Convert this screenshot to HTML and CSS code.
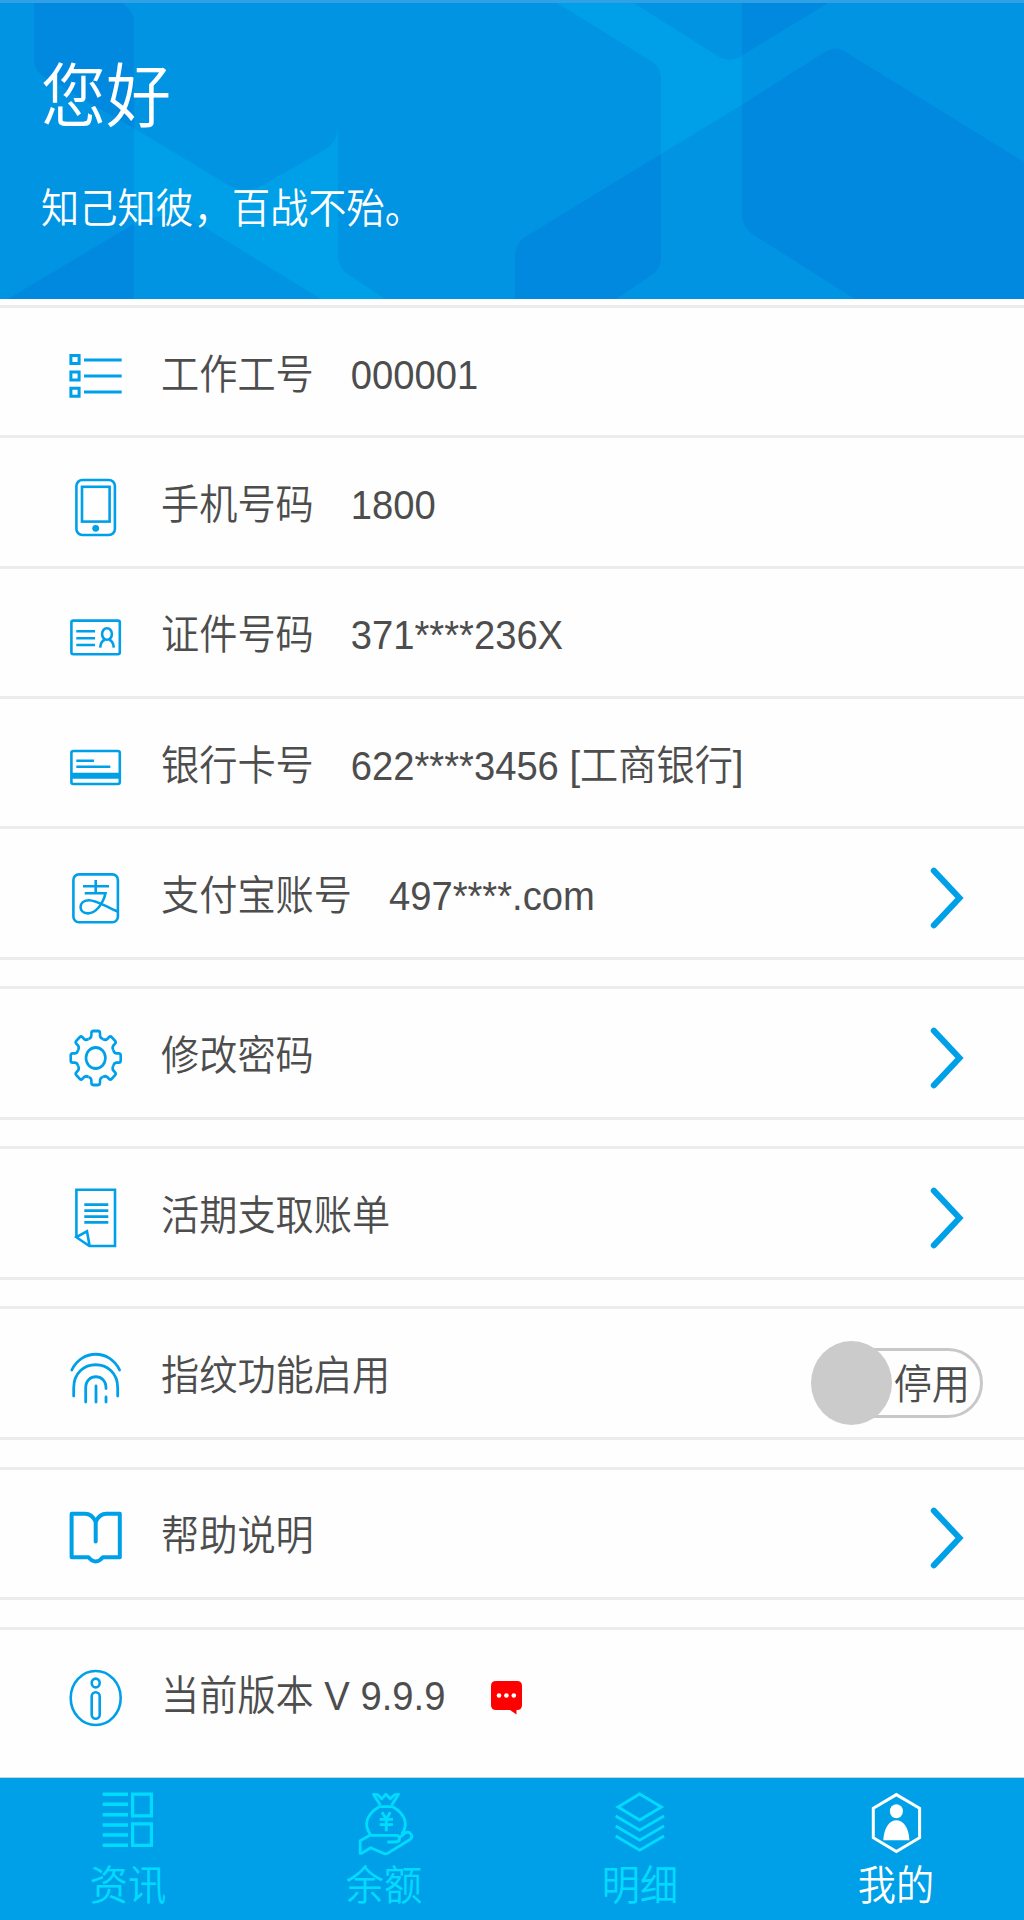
FILE: index.html
```html
<!DOCTYPE html>
<html lang="zh-CN">
<head>
    <meta charset="UTF-8">
    <meta name="viewport" content="width=device-width, initial-scale=1.0">
    <title>我的</title>
    <link rel="stylesheet" href="styles.css">
</head>
<body>
    <header class="header">
        <svg class="header-bg" viewBox="0 0 1024 300" preserveAspectRatio="none">
            <g fill="#00a0e8">
                <path d="M134 127L229 185Q248 194 264 184L326 148Q338 140 338 125V255Q338 266 345 273L385 300H321L209 230Q171 203 134 226Z"/>
                <path d="M557 0H634L718 54Q728 61 742 54V103L661 153V76Q661 67 653 60Z"/>
            </g>
            <g fill="#0089df">
                <path d="M34 0H122Q134 8 134 20V127L43 74Q34 68 34 58Z"/>
                <path d="M8 300L134 224V300Z"/>
                <path d="M742 0H828L742 53Z"/>
                <path d="M742 103L826 49Q835 43 846 50L1024 161V300H855L752 234Q742 226 742 216Z"/>
                <path d="M661 153L524 238Q515 245 515 256V300H616L653 275Q661 268 661 258Z"/>
            </g>
        </svg>
        <h1 class="hello">您好</h1>
        <p class="motto">知己知彼，百战不殆。</p>
    </header>

    <main>
        <!-- Account info -->
        <section class="group">
            <div class="row">
                <svg class="icon" viewBox="0 0 60 64">
                    <path stroke-width="3" d="M4.9 11.5h8.2v8h-8.2zM4.9 28h8.2v8h-8.2zM4.9 44.2h8.2v8h-8.2z"/>
                    <path stroke-width="3" d="M18 16h37.7M18 32h37.7M18 48h37.7"/>
                </svg>
                <span class="label">工作工号</span>
                <span class="value">000001</span>
            </div>
            <div class="row">
                <svg class="icon" viewBox="0 0 60 64">
                    <rect x="10.4" y="5" width="38.5" height="55" rx="6"/>
                    <rect x="16" y="11.8" width="27.6" height="34.8"/>
                    <circle class="fill" cx="29.7" cy="53.3" r="3.4"/>
                </svg>
                <span class="label">手机号码</span>
                <span class="value">1800</span>
            </div>
            <div class="row">
                <svg class="icon" viewBox="0 0 60 64">
                    <rect x="5.4" y="15.6" width="48.4" height="33.7" rx="2"/>
                    <path d="M10.3 26.3H29M10.3 33.3H29M10.3 40H29"/>
                    <ellipse cx="41" cy="29" rx="4.9" ry="5.8"/>
                    <path d="M34.2 42.6Q34.8 36 39 34.8M47.8 42.6Q47.2 36 43 34.8"/>
                </svg>
                <span class="label">证件号码</span>
                <span class="value">371****236X</span>
            </div>
            <div class="row">
                <svg class="icon" viewBox="0 0 60 64">
                    <rect x="5.4" y="16" width="48.4" height="33" rx="2"/>
                    <path d="M10.3 25.7H28M10.3 31.7H44.3"/>
                    <path stroke-width="6" d="M5 40.7H54"/>
                </svg>
                <span class="label">银行卡号</span>
                <span class="value">622****3456 [工商银行]</span>
            </div>
            <div class="row">
                <svg class="icon" viewBox="0 0 60 64">
                    <rect x="7.4" y="8.4" width="44.5" height="47.8" rx="5.5"/>
                    <path d="M29.7 14V27M17 20.3H43M18.7 27.3H39.5C37 38 30 47 22 47.4C12 47 12 35 22.5 34.2C31 34 40 41 51.6 45.5"/>
                </svg>
                <span class="label">支付宝账号</span>
                <span class="value">497****.com</span>
                <svg class="arrow" viewBox="0 0 36 64"><path d="M5.8 4.6L31.5 32L5.8 59.4"/></svg>
            </div>
        </section>

        <section class="group">
            <div class="row">
                <svg class="icon" viewBox="0 0 60 64">
                    <defs>
                        <path id="tooth" d="M-7.3-17.6Q-4.3-18.4-4.3-21V-23Q-4.3-25-2.3-25H2.3Q4.3-25 4.3-23V-21Q4.3-18.4 7.3-17.6"/>
                    </defs>
                    <g transform="translate(29.7 32) scale(1 1.08)">
                        <use href="#tooth"/>
                        <use href="#tooth" transform="rotate(45)"/>
                        <use href="#tooth" transform="rotate(90)"/>
                        <use href="#tooth" transform="rotate(135)"/>
                        <use href="#tooth" transform="rotate(180)"/>
                        <use href="#tooth" transform="rotate(225)"/>
                        <use href="#tooth" transform="rotate(270)"/>
                        <use href="#tooth" transform="rotate(315)"/>
                        <circle r="9.7"/>
                    </g>
                </svg>
                <span class="label">修改密码</span>
                <svg class="arrow" viewBox="0 0 36 64"><path d="M5.8 4.6L31.5 32L5.8 59.4"/></svg>
            </div>
        </section>

        <section class="group">
            <div class="row">
                <svg class="icon" viewBox="0 0 60 64">
                    <path d="M10.4 51.7V3.8H49V60H23.3L10.4 51.2L21 45.3L23.6 60"/>
                    <path stroke-width="2.8" d="M18.3 18.6H42.3M18.3 24.6H42.3M18.3 30.6H42.3M18.3 36.3H42.3"/>
                </svg>
                <span class="label">活期支取账单</span>
                <svg class="arrow" viewBox="0 0 36 64"><path d="M5.8 4.6L31.5 32L5.8 59.4"/></svg>
            </div>
        </section>

        <section class="group">
            <div class="row">
                <svg class="icon" viewBox="0 0 60 64">
                    <path stroke-width="2.8" stroke-linecap="round" d="M5.8 24C16 3 43.4 3 53.6 24M7.7 50V42C7.7 11 51.7 11 51.7 42V50M40 42.5V42C40 27 19.7 27 19.7 42V56M40 51V56M30 40V56"/>
                </svg>
                <span class="label">指纹功能启用</span>
                <div class="switch">
                    <span class="switch-text">停用</span>
                    <span class="knob"></span>
                </div>
            </div>
        </section>

        <section class="group">
            <div class="row">
                <svg class="icon" viewBox="0 0 60 64">
                    <path stroke-width="4" stroke-linejoin="round" stroke-linecap="round" d="M29.7 35.5V16Q26 7.8 19 7.8H5.6V51.2H22.5Q25.5 55.4 29.7 55.4Q33.9 55.4 36.9 51.2H53.8V7.8H40.4Q33.4 7.8 29.7 16"/>
                </svg>
                <span class="label">帮助说明</span>
                <svg class="arrow" viewBox="0 0 36 64"><path d="M5.8 4.6L31.5 32L5.8 59.4"/></svg>
            </div>
        </section>

        <section class="group">
            <div class="row">
                <svg class="icon" viewBox="0 0 60 64">
                    <ellipse cx="29.7" cy="32" rx="25" ry="27"/>
                    <ellipse cx="29.7" cy="17" rx="4" ry="4.4"/>
                    <rect x="25.7" y="26.3" width="8" height="26.5" rx="4"/>
                </svg>
                <span class="label">当前版本 V 9.9.9</span>
                <svg class="message" viewBox="0 0 32 34">
                    <path fill="#f00" d="M5 0H26Q31 0 31 5V24Q31 29 26 29H25.5V33.5L19 29H5Q0 29 0 24V5Q0 0 5 0Z"/>
                    <g fill="#fff"><circle cx="8" cy="14.5" r="2.3"/><circle cx="15.4" cy="14.5" r="2.3"/><circle cx="22.8" cy="14.5" r="2.3"/></g>
                </svg>
            </div>
        </section>
    </main>

    <!-- Bottom tabs -->
    <nav class="tabs">
        <a class="tab">
            <svg viewBox="0 0 60 70">
                <path stroke-width="3.5" d="M4.7 6.3H30M4.7 16.3H30M4.7 26.7H30M4.7 37H30M4.7 47H30M4.7 57.3H30"/>
                <path stroke-width="3.2" d="M34.6 6.2H53.4V27.8H34.6zM34.6 35.8H53.4V57.4H34.6z"/>
            </svg>
            <span>资讯</span>
        </a>
        <a class="tab">
            <svg viewBox="0 0 60 70">
                <path stroke-linejoin="round" d="M26.3 17L19.5 6.5L23.7 6.7L27.7 10.7L32 6.3L36.3 10.7L40.7 6.7L44.5 6.5L37.7 17M25.3 18.7H38.7M25.3 18.7C13 26 9 36 16.3 46.5M38.7 18.7C51 26 55 36 47.7 46.5"/>
                <path d="M28 24.3L32.3 31L36.3 24.3M32.3 31V43.3M25.7 31.3H39M25.7 36.7H39"/>
                <path stroke-linejoin="round" d="M33.3 54H42Q45.5 54 45.5 50.5Q45.5 47.3 42 47.3H16L6.2 52.7V65.4H7.5L16.7 59.7L30.5 65.7Q32 66.3 33.5 65.4L56 51.5C60 48 56 42.5 51 45L45.5 49.6"/>
            </svg>
            <span>余额</span>
        </a>
        <a class="tab">
            <svg viewBox="0 0 60 70">
                <path d="M29.7 6L51.5 19L29.7 32L8 19ZM5.7 28L29.7 42.2L54 28M5.7 38L29.7 52.2L54 38M5.7 48L29.7 62.2L54 48"/>
            </svg>
            <span>明细</span>
        </a>
        <a class="tab active">
            <svg viewBox="0 0 60 70">
                <path stroke-width="3" d="M30.4 6.6L53.6 20.3V49.7L30.4 63.6L7.3 49.7V20.3Z"/>
                <ellipse class="fill" cx="30.4" cy="23.3" rx="6.5" ry="7"/>
                <path class="fill" d="M17.3 52.3C18 39 24 32.3 30.4 32.3S42.8 39 43.4 52.3Z"/>
            </svg>
            <span>我的</span>
        </a>
    </nav>
</body>
</html>
```
FILE: styles.css
```css
* {
    box-sizing: border-box;
}
body {
    margin: 0;
    height: 1920px;
    display: flex;
    flex-direction: column;
    overflow: hidden;
    background-color: #fefefe;
    color: #4d4d4d;
    font-family: "Liberation Sans", "Noto Sans CJK SC", sans-serif;
    font-size: 38.2px;
    font-weight: 350;
}
svg {
    display: block;
    fill: none;
    flex-shrink: 0;
}

/* Header */
.header {
    position: relative;
    height: 299px;
    flex-shrink: 0;
    padding: 50px 0 0 41px;
    border-top: 3px solid #30a1e7;
    background-color: #0094e3;
    color: #fff;
}
.header-bg {
    position: absolute;
    left: 0;
    top: 0;
    width: 100%;
    height: 100%;
}
.hello,
.motto {
    position: relative;
    margin: 0;
    font-weight: 350;
    transform: scaleY(1.08);
}
.hello {
    font-size: 65px;
    line-height: 90px;
}
.motto {
    margin-top: 41px;
    line-height: 50px;
}

/* Setting rows */
main {
    flex: 1;
    min-height: 0;
    padding-top: 6px;
}
.group {
    border-top: 3px solid #ececec;
    margin-bottom: 26.7px;
}
.group:last-child {
    margin-bottom: 0;
}
.row {
    display: flex;
    align-items: center;
    height: 130.35px;
    padding: 9px 60px 0 66px;
    border-bottom: 3px solid #ececec;
    white-space: nowrap;
}
.group:last-child .row {
    border-bottom-color: transparent;
}
.icon {
    width: 60px;
    height: 64px;
    margin-right: 35px;
    stroke: #00a0e9;
    stroke-width: 2.6;
}
.icon .fill {
    fill: #00a0e9;
    stroke: none;
}
.label,
.value,
.switch-text,
.tab span {
    line-height: 50px;
    transform: scaleY(1.08);
}
.label,
.value {
    margin-bottom: 3px;
}
.value {
    margin-left: 37px;
}
.arrow {
    width: 36px;
    height: 64px;
    margin-left: auto;
    stroke: #00a0e9;
    stroke-width: 6;
    stroke-linecap: round;
}
.message {
    width: 32px;
    height: 34px;
    margin-left: 46px;
}

/* Switch */
.switch {
    position: relative;
    width: 168px;
    height: 70px;
    margin: 11px -19px 0 auto;
    padding: 9px 10px 0 0;
    border: 3px solid #c8c8c8;
    border-radius: 35px;
    text-align: right;
}
.switch-text {
    display: block;
}
.knob {
    position: absolute;
    left: -7px;
    top: -10px;
    width: 81px;
    height: 84px;
    border-radius: 50%;
    background-color: #cbcbcb;
}

/* Bottom tabs */
.tabs {
    display: flex;
    height: 143px;
    flex-shrink: 0;
    border-top: 1px solid #c5d5dd;
    background-color: #00a0e9;
}
.tab {
    flex: 1;
    display: flex;
    flex-direction: column;
    align-items: center;
    padding-top: 10px;
    color: #00dcff;
}
.tab svg {
    width: 60px;
    height: 70px;
    margin-bottom: 3px;
    stroke: currentColor;
    stroke-width: 2.8;
}
.tab .fill {
    fill: currentColor;
    stroke: none;
}
.tab.active {
    color: #fff;
}
```
